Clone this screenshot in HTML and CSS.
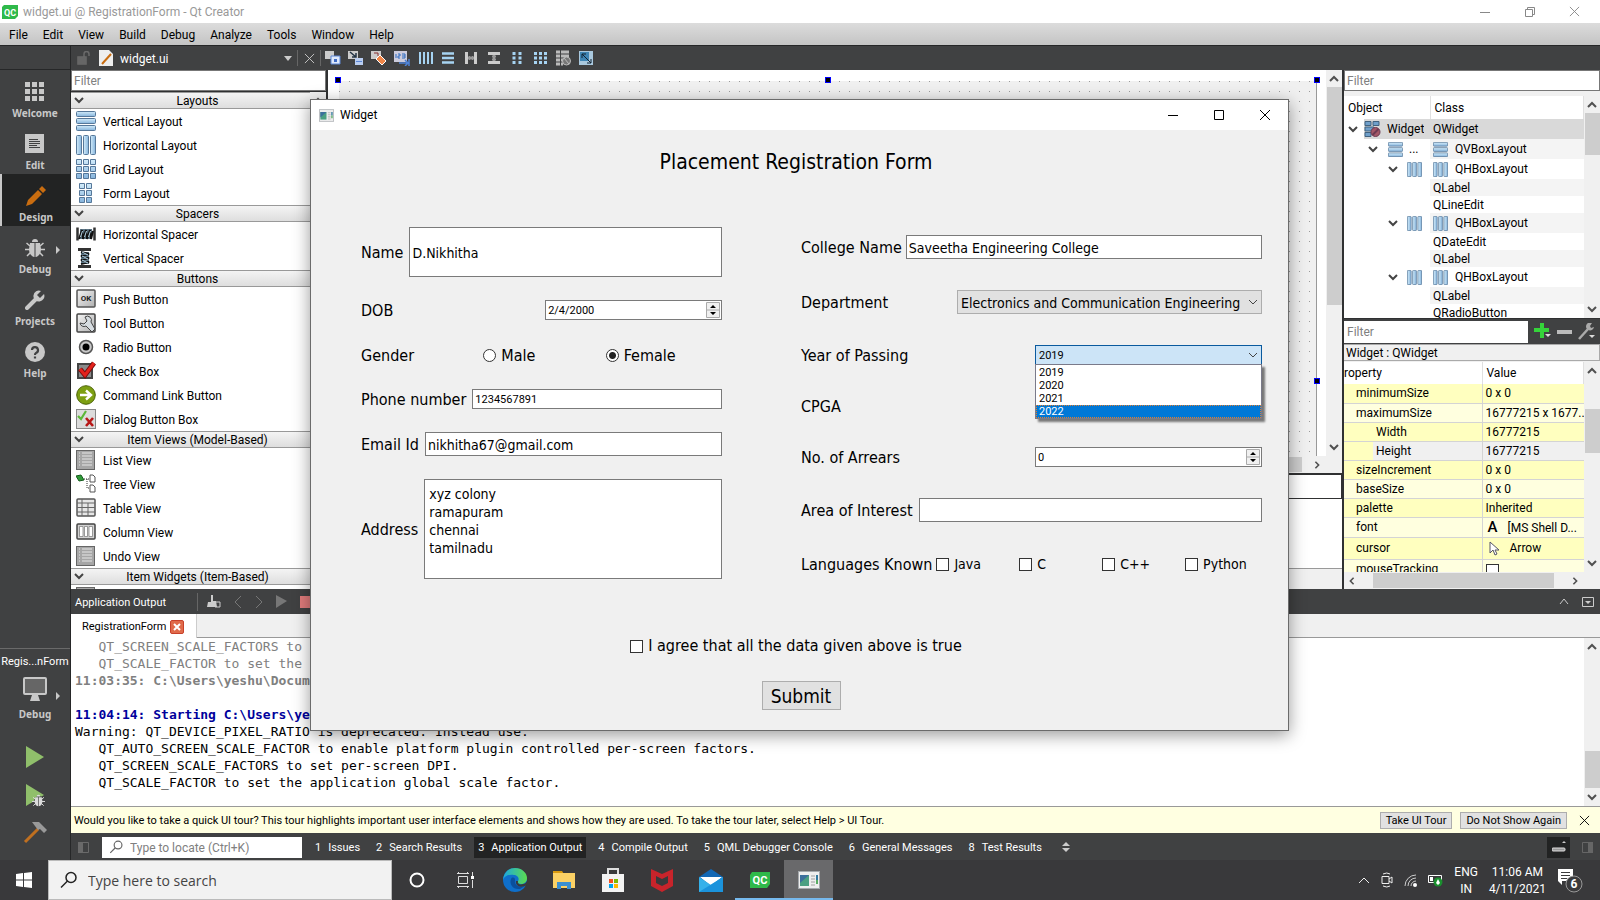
FILE: index.html
```html
<!DOCTYPE html>
<html lang="en">
<head>
<meta charset="utf-8">
<title>widget.ui @ RegistrationForm - Qt Creator</title>
<link rel="stylesheet" href="styles.css">
</head>
<body>
<svg class="defs" aria-hidden="true">
  <defs>
    <linearGradient id="blueV" x1="0" y1="0" x2="0" y2="1"><stop offset="0" stop-color="#d3ecfa"/><stop offset="1" stop-color="#86b4dc"/></linearGradient>
    <linearGradient id="blueH" x1="0" y1="0" x2="1" y2="0"><stop offset="0" stop-color="#d3ecfa"/><stop offset="1" stop-color="#86b4dc"/></linearGradient>
    <linearGradient id="greyV" x1="0" y1="0" x2="1" y2="1"><stop offset="0" stop-color="#f4f4f4"/><stop offset="1" stop-color="#b0b0b0"/></linearGradient>
    <linearGradient id="edge" x1="0" y1="0" x2="1" y2="0"><stop offset="0" stop-color="#1ca7e0"/><stop offset="1" stop-color="#5bdc4e"/></linearGradient>
  </defs>
  <symbol id="vlay" viewBox="0 0 20 20"><g fill="url(#blueV)" stroke="#56789a"><rect x=".5" y=".5" width="19" height="5" rx="1"/><rect x=".5" y="7.500" width="19" height="5" rx="1"/><rect x=".5" y="14.500" width="19" height="5" rx="1"/></g></symbol>
  <symbol id="hlay" viewBox="0 0 20 20"><g fill="url(#blueH)" stroke="#56789a"><rect x=".5" y=".5" width="5" height="19" rx="1"/><rect x="7.500" y=".5" width="5" height="19" rx="1"/><rect x="14.500" y=".5" width="5" height="19" rx="1"/></g></symbol>
  <symbol id="grid" viewBox="0 0 20 20"><g fill="url(#blueV)" stroke="#56789a"><path d="M.5 .5h5v5h-5zM7.500 .5h5v5h-5zM14.500 .5h5v5h-5zM.5 7.500h5v5h-5zM7.500 7.500h5v5h-5zM14.500 7.500h5v5h-5zM.5 14.500h5v5h-5zM7.500 14.500h5v5h-5zM14.500 14.500h5v5h-5z"/></g></symbol>
  <symbol id="formlay" viewBox="0 0 20 20"><g fill="url(#blueV)" stroke="#56789a"><path d="M3.500 .5h5v5h-5zM10.500 .5h5v5h-5zM3.500 7.500h5v5h-5zM10.500 7.500h5v5h-5zM3.500 14.500h5v5h-5zM10.500 14.500h5v5h-5z"/></g></symbol>
  <symbol id="hspace" viewBox="0 0 20 20"><path d="M4 5h12v10H4z" fill="#5d7686"/><path d="M1.500 3.500v13M18.500 3.500v13" stroke="#333" stroke-width="2.500"/><path d="M3 15l3-9 1 9 3-9 1 9 3-9 1 9 2-8" fill="none" stroke="#111" stroke-width="2"/><path d="M4.500 13l2-6M8.500 13l2-6M12.500 13l2-6" stroke="#b8d8ea"/></symbol>
  <symbol id="vspace" viewBox="0 0 20 20"><path d="M5 4h8v12H5z" fill="#5d7686"/><path d="M2 1.500h13M2 18.500h13" stroke="#333" stroke-width="3"/><path d="M5 4l8 2-8 2 8 2-8 2 8 2-8 2" fill="none" stroke="#111" stroke-width="2"/><path d="M6 4l6 3M6 8l6 3M6 12l6 3" stroke="#b8d8ea"/></symbol>
  <symbol id="tbtn" viewBox="0 0 20 20"><rect x="1" y="1" width="18" height="18" rx="1" fill="url(#greyV)" stroke="#444" stroke-width="1.500"/><path d="M9 4a4 4 0 0 1 6 5l4 7-3 3-6-6a4 4 0 0 1-6-3l4 1 3-3z" fill="#d6dce0" stroke="#444"/></symbol>
  <symbol id="rbtn" viewBox="0 0 20 20"><circle cx="10" cy="10" r="6.500" fill="#c8c8c8" stroke="#555" stroke-width="1.500"/><circle cx="10" cy="10" r="3.500"/></symbol>
  <symbol id="cbtn" viewBox="0 0 20 20"><rect x="2" y="3" width="14" height="14" fill="#8a8a8a" stroke="#444" stroke-width="2"/><path d="M4 8l5 6L18 2" fill="none" stroke="#7a0d0d" stroke-width="5"/><path d="M4 8l5 6L18 2" fill="none" stroke="#e3221c" stroke-width="3"/></symbol>
  <symbol id="clbtn" viewBox="0 0 20 20"><circle cx="10" cy="10" r="9.300" fill="#7d9f12" stroke="#4d6408"/><path d="M4 10h10M10 5.500l5 4.500-5 4.500" fill="none" stroke="#fff" stroke-width="2.400"/></symbol>
  <symbol id="dbtn" viewBox="0 0 20 20"><rect x=".5" y=".5" width="19" height="19" fill="#dcdcdc" stroke="#888"/><path d="M2 7l3 3 5-8" fill="none" stroke="#5cb838" stroke-width="2.200"/><path d="M10 9l7 8M17 9l-7 8" stroke="#b81818" stroke-width="2.600"/></symbol>
  <symbol id="lview" viewBox="0 0 20 20"><rect x=".5" y=".5" width="18" height="19" fill="#a6a6a6" stroke="#666"/><path d="M3 3h1M3 6h1M3 9h1M3 12h1M3 15h1M6 3h10M6 6h10M6 9h10M6 12h10M6 15h10" stroke="#e6e6e6"/></symbol>
  <symbol id="tview" viewBox="0 0 20 20"><path d="M0 2l5-1 3 5-5 1z" fill="#2f9b38" stroke="#145a1c"/><path d="M8 5h6M11 5v9h3" stroke="#333" stroke-dasharray="1 1" fill="none"/><path d="M14 1h3l2 2v5h-5zM14 11h3l2 2v5h-5z" fill="#fff" stroke="#555"/></symbol>
  <symbol id="taview" viewBox="0 0 20 20"><rect x="1" y="1" width="18" height="17" rx="1" fill="#e6e6e6" stroke="#555" stroke-width="1.500"/><path d="M1 5h18M1 9.500h18M1 14h18M6 1v17M12 5v13" stroke="#666"/></symbol>
  <symbol id="coview" viewBox="0 0 20 20"><rect x="1" y="2" width="18" height="15" rx="1" fill="#d2d2d2" stroke="#444" stroke-width="1.500"/><path d="M3.500 4.500h3.500v10h-3.500zM8.500 4.500h3v10h-3zM13 4.500h3.500v10h-3.500z" fill="#fff" stroke="#777" stroke-width=".7"/></symbol>
  <symbol id="dn" viewBox="0 0 10 8"><path d="M1 2l4 4 4-4" fill="none" stroke="currentColor" stroke-width="2"/></symbol>
  <symbol id="up" viewBox="0 0 10 8"><path d="M1 6l4-4 4 4" fill="none" stroke="currentColor" stroke-width="2"/></symbol>
  <symbol id="lt" viewBox="0 0 8 10"><path d="M6 1l-4 4 4 4" fill="none" stroke="currentColor" stroke-width="2"/></symbol>
  <symbol id="rt" viewBox="0 0 8 10"><path d="M2 1l4 4-4 4" fill="none" stroke="currentColor" stroke-width="2"/></symbol>
  <symbol id="x" viewBox="0 0 12 12"><path d="M1 1l10 10M11 1L1 11" fill="none" stroke="currentColor"/></symbol>
  <symbol id="mag" viewBox="0 0 18 18"><circle cx="11" cy="6.500" r="5" fill="none" stroke="currentColor" stroke-width="1.500"/><path d="M7.500 10L1 16.500" stroke="currentColor" stroke-width="1.500"/></symbol>
  <symbol id="bug" viewBox="0 0 20 20"><path d="M7 4a3 3 0 0 1 6 0zM5 5h4.500v14C6 18.500 4 15 4 11zM10.500 5H15l1 6c0 4-2 7.500-5.500 8z" fill="currentColor"/><path d="M5 8L1.500 5M15 8l3.500-3M5 11.500H0M15 11.500h5M5.500 14.500L2 18M14.500 14.500L18 18" stroke="currentColor" stroke-width="1.500"/></symbol>
  <symbol id="win" viewBox="0 0 22 18"><rect x=".5" y=".5" width="21" height="17" fill="#eee" stroke="#a5a9ad"/><rect x="2" y="4" width="9" height="11" fill="#4b9f82"/><path d="M2 4h9L2 12z" fill="#3c6f9c"/><path d="M13 5h4M13 8h4M13 11h4M13 14h4" stroke="#bbb" stroke-width="1.500"/><path d="M19 4v5" stroke="#337a9f" stroke-width="2"/><path d="M19 9v4" stroke="#58ac62" stroke-width="2"/></symbol>
</svg>

<header class="titlebar">
  <svg width="16" height="16" viewBox="0 0 16 16"><path d="M2 1h14v11l-3 3H0V3z" fill="#2fb94a"/><text x="8" y="12" class="qc-s">QC</text></svg>
  <span class="tb-title">widget.ui @ RegistrationForm - Qt Creator</span>
  <button class="wbtn" aria-label="Minimize"><svg width="10" height="10"><path d="M0 5.500h10" stroke="#888"/></svg></button>
  <button class="wbtn" aria-label="Restore"><svg width="10" height="10" viewBox="0 0 10 10"><path d="M.5 2.500h7v7h-7zM2.500 2.500v-2h7v7h-2" fill="none" stroke="#888"/></svg></button>
  <button class="wbtn" aria-label="Close"><svg width="11" height="11"><use href="#x"/></svg></button>
</header>
<nav class="menubar">
  <a href="#file">File</a><a href="#edit">Edit</a><a href="#view">View</a><a href="#build">Build</a><a href="#debug">Debug</a><a href="#analyze">Analyze</a><a href="#tools">Tools</a><a href="#window">Window</a><a href="#help">Help</a>
</nav>

<div class="ide">
  <aside class="modes">
    <div class="modes-cap"></div>
    <button class="mode"><svg width="20" height="20"><path fill="#c8c8c8" d="M0 0h5v5H0zM7 0h5v5H7zM14 0h5v5h-5zM0 7h5v5H0zM7 7h5v5H7zM14 7h5v5h-5zM0 14h5v5H0zM7 14h5v5H7zM14 14h5v5h-5z"/></svg>Welcome</button>
    <button class="mode"><svg width="20" height="20"><path fill="#c8c8c8" d="M0 0h19v19H0z"/><path d="M4 5.500h9M4 7.500h11M4 9.500h11M4 11.500h8M4 13.500h11" stroke="#404142"/></svg>Edit</button>
    <button class="mode on"><svg width="20" height="20"><path fill="#c96d10" d="M0 20l2-6L12 4l4 4L6 18zM13 3l3-3 4 4-3 3z"/></svg>Design</button>
    <button class="mode"><svg width="20" height="20"><use href="#bug"/></svg>Debug<svg class="mode-arr" width="4" height="8"><path d="M0 0l4 4-4 4z" fill="#c8c8c8"/></svg></button>
    <button class="mode"><svg width="20" height="20"><path d="M2 18l9-9" stroke="#c8c8c8" stroke-width="4" stroke-linecap="round"/><path d="M16 1a5.500 5.500 0 1 0 3 3l-4 4-3-3z" fill="#c8c8c8"/></svg>Projects</button>
    <button class="mode"><svg width="20" height="20"><circle cx="10" cy="10" r="10" fill="#c8c8c8"/><path d="M7 8a3 3 0 1 1 4 3q-1 .5-1 2M10 14.500v2" fill="none" stroke="#404142" stroke-width="2.200"/></svg>Help</button>
    <div class="kit">
      <span class="kit-name">Regis...nForm</span>
      <button class="mode"><svg width="24" height="24"><rect x="1" y="1" width="22" height="16" rx="1" fill="#666" stroke="#c8c8c8" stroke-width="2"/><path d="M9 18h6l2 6H7z" fill="#c8c8c8"/></svg>Debug<svg class="mode-arr" width="4" height="8"><path d="M0 0l4 4-4 4z" fill="#c8c8c8"/></svg></button>
      <button class="run" aria-label="Run"><svg width="20" height="22"><path d="M1 0l18 11L1 22z" fill="#90bf6b"/></svg></button>
      <button class="run" aria-label="Debug run"><svg width="20" height="23" viewBox="0 0 20 23"><path d="M1 0l18 11L1 22z" fill="#90bf6b"/><circle cx="14" cy="17" r="5" fill="#404142"/><g color="#dcdcdc"><use href="#bug" x="7" y="10" width="13" height="13"/></g></svg></button>
      <button class="run" aria-label="Build"><svg width="24" height="22"><path d="M2 20L15 7" stroke="#c07020" stroke-width="3"/><path d="M9 0h7l8 8-3 3-4-4-2 1-3-4z" fill="#999"/></svg></button>
    </div>
  </aside>

  <div class="work">
    <div class="toolbar">
      <div class="tb-doc">
        <svg width="14" height="14"><path d="M1 6h8v7H1zM7 6V3a2 2 0 0 1 5 0v2" fill="none" stroke="#6a6a6a" stroke-width="1.500"/><path d="M1 6h8v7H1z" fill="#666"/></svg>
        <svg width="14" height="16"><path d="M0 0h10l4 4v12H0z" fill="#eee"/><path d="M3 14L12 4" stroke="#c96d10" stroke-width="2"/></svg>
        <span>widget.ui</span>
        <svg class="push" width="8" height="5"><path d="M0 0h8L4 5z" fill="#ccc"/></svg>
      </div>
      <button class="tool close" aria-label="Close document"><svg width="11" height="11"><use href="#x"/></svg></button>
      <button class="tool" aria-label="Edit widgets"><svg width="16" height="16"><path d="M0 1h9v8H0z" fill="#ccc"/><path d="M6 6h9v8H6z" fill="#dfe9fb" stroke="#5c87d6"/><path d="M9 9h3v3H9z" fill="#3f6bc4"/></svg></button>
      <button class="tool" aria-label="Edit signals"><svg width="16" height="16"><path d="M0 1h10v8H0z" fill="#ccc"/><path d="M2 2l6 5M8 3v4H4" stroke="#234" stroke-width="1.500" fill="none"/><path d="M7 8h8v7H7z" fill="#b9cdf0"/><path d="M8 11.500h6" stroke="#5c87d6"/></svg></button>
      <button class="tool" aria-label="Edit buddies"><svg width="16" height="16"><path d="M0 1h10v8H0z" fill="#ccc"/><path d="M3 3h4v3" stroke="#833" fill="none"/><path d="M9 5l6 6-4 4-6-6z" fill="#f08648" stroke="#fff"/></svg></button>
      <button class="tool" aria-label="Edit tab order"><svg width="16" height="16"><path d="M0 1h13v11H0z" fill="#ccd"/><path d="M2 4v4M4 4h2v2H4v2h2M8 4h3v4H8M8 6h3" stroke="#2d6ac0" fill="none"/><path d="M5 13h8M11 10l3 3-3 3M15 9v7" stroke="#4d83d9" stroke-width="1.500" fill="none"/></svg></button>
      <button class="tool" aria-label="Lay out horizontally"><svg width="16" height="16"><path d="M3 2v12M7 2v12M11 2v12M15 2v12" stroke="#a6d3f2" stroke-width="2"/></svg></button>
      <button class="tool" aria-label="Lay out vertically"><svg width="16" height="16"><path d="M2 3.500h12M2 8h12M2 12.500h12" stroke="#a6d3f2" stroke-width="2.500"/></svg></button>
      <button class="tool" aria-label="Horizontal splitter"><svg width="16" height="16"><path d="M3.500 2v12M12.500 2v12" stroke="#ccc" stroke-width="3"/><path d="M5 8h6M6.500 6v4M9.500 6v4" stroke="#999" stroke-width="2"/></svg></button>
      <button class="tool" aria-label="Vertical splitter"><svg width="16" height="16"><path d="M2 3.500h12M2 12.500h12" stroke="#ccc" stroke-width="3"/><path d="M8 5v6M6 6.500h4M6 9.500h4" stroke="#999" stroke-width="2"/></svg></button>
      <button class="tool" aria-label="Form layout"><svg width="16" height="16"><path d="M5 2v12M11 2v12" stroke="#a6d3f2" stroke-width="3" stroke-dasharray="3 1.500"/></svg></button>
      <button class="tool" aria-label="Grid layout"><svg width="16" height="16"><path d="M3.500 2v12M8.500 2v12M13.500 2v12" stroke="#a6d3f2" stroke-width="3" stroke-dasharray="3 1.500"/></svg></button>
      <button class="tool" aria-label="Break layout"><svg width="16" height="16"><path d="M1 2h13M1 6h13M1 10h7M1 14h7" stroke="#bbb" stroke-width="3"/><path d="M5.500 0v16" stroke="#404142"/><circle cx="11.500" cy="11" r="4" fill="#777" stroke="#bbb"/><path d="M9 8l5 6" stroke="#bbb"/></svg></button>
      <button class="tool" aria-label="Adjust size"><svg width="16" height="16"><path d="M1 1h14v14H1z" fill="#a9c8de"/><path d="M2 2h9v9H2z" fill="#3f85b4"/><path d="M4 4l9 9M13 9v4H9M4 8V4h4" stroke="#123" fill="none"/></svg></button>
    </div>

    <div class="panes">
      <section class="wbox">
        <input class="filter" type="text" placeholder="Filter" aria-label="Filter widgets">
        <div class="wlist">
          <div class="wscroll">
            <h2 class="whead"><svg width="10" height="8"><use href="#dn"/></svg>Layouts</h2>
            <ul><li><svg><use href="#vlay"/></svg><span>Vertical Layout</span></li><li><svg><use href="#hlay"/></svg><span>Horizontal Layout</span></li><li><svg><use href="#grid"/></svg><span>Grid Layout</span></li><li><svg><use href="#formlay"/></svg><span>Form Layout</span></li></ul>
            <h2 class="whead"><svg width="10" height="8"><use href="#dn"/></svg>Spacers</h2>
            <ul><li><svg><use href="#hspace"/></svg><span>Horizontal Spacer</span></li><li><svg><use href="#vspace"/></svg><span>Vertical Spacer</span></li></ul>
            <h2 class="whead"><svg width="10" height="8"><use href="#dn"/></svg>Buttons</h2>
            <ul><li><svg viewBox="0 0 20 20"><rect x="1" y="1" width="18" height="17" rx="1" fill="url(#greyV)" stroke="#555" stroke-width="1.500"/><text x="10" y="12" class="ok">OK</text></svg><span>Push Button</span></li><li><svg><use href="#tbtn"/></svg><span>Tool Button</span></li><li><svg><use href="#rbtn"/></svg><span>Radio Button</span></li><li><svg><use href="#cbtn"/></svg><span>Check Box</span></li><li><svg><use href="#clbtn"/></svg><span>Command Link Button</span></li><li><svg><use href="#dbtn"/></svg><span>Dialog Button Box</span></li></ul>
            <h2 class="whead"><svg width="10" height="8"><use href="#dn"/></svg>Item Views (Model-Based)</h2>
            <ul><li><svg><use href="#lview"/></svg><span>List View</span></li><li><svg><use href="#tview"/></svg><span>Tree View</span></li><li><svg><use href="#taview"/></svg><span>Table View</span></li><li><svg><use href="#coview"/></svg><span>Column View</span></li><li><svg><use href="#lview"/></svg><span>Undo View</span></li></ul>
            <h2 class="whead"><svg width="10" height="8"><use href="#dn"/></svg>Item Widgets (Item-Based)</h2>
            <ul><li><svg><use href="#lview"/></svg></li></ul>
          </div>
          <div class="sb"><svg class="ar"><use href="#up"/></svg></div>
        </div>
      </section>

      <section class="canvas">
        <div class="canvas-view">
          <div class="sheet">
            <i class="handle h-tl"></i><i class="handle h-tc"></i><i class="handle h-tr"></i><i class="handle h-mr"></i>
            <div class="layout-line"></div>
          </div>
          <div class="sb"><svg class="ar"><use href="#up"/></svg><b class="thumb t-canvas"></b><svg class="ar end"><use href="#dn"/></svg></div>
        </div>
        <div class="hsb"><b class="hthumb"></b><svg class="ar"><use href="#rt"/></svg></div>
        <div class="act-filter"></div>
        <div class="act-list"></div>
        <div class="act-tabs"></div>
      </section>

      <section class="inspect">
        <div class="objects">
          <input class="filter" type="text" placeholder="Filter" aria-label="Filter objects">
          <div class="objs">
            <table class="tree">
              <thead><tr><th>Object</th><th>Class</th></tr></thead>
              <tbody>
                <tr class="sel tall"><td><div class="c l0"><svg class="ex"><use href="#dn"/></svg><span class="nm"><svg class="ic" viewBox="0 0 16 16"><path d="M.5 .5h6v4h-6zM8.500 .5h6v4h-6zM.5 6h9v4h-9zM.5 11.500h6v4h-6z" fill="#6f9fca" stroke="#41627f"/><circle cx="11" cy="11" r="4.500" fill="#a35767" stroke="#6d3a52"/><path d="M8 14l6-6" stroke="#6d3a52" stroke-width="2"/></svg>Widget</span></div></td><td>QWidget</td></tr>
                <tr class="alt tall"><td><div class="c l1"><svg class="ex"><use href="#dn"/></svg><span class="nm"><svg class="ic"><use href="#vlay"/></svg>...</span></div></td><td><svg class="ic"><use href="#vlay"/></svg>QVBoxLayout</td></tr>
                <tr class="tall"><td><div class="c l2"><svg class="ex"><use href="#dn"/></svg><span class="nm"><svg class="ic"><use href="#hlay"/></svg></span></div></td><td><svg class="ic"><use href="#hlay"/></svg>QHBoxLayout</td></tr>
                <tr class="alt"><td></td><td>QLabel</td></tr>
                <tr><td></td><td>QLineEdit</td></tr>
                <tr class="alt tall"><td><div class="c l2"><svg class="ex"><use href="#dn"/></svg><span class="nm"><svg class="ic"><use href="#hlay"/></svg></span></div></td><td><svg class="ic"><use href="#hlay"/></svg>QHBoxLayout</td></tr>
                <tr><td></td><td>QDateEdit</td></tr>
                <tr class="alt"><td></td><td>QLabel</td></tr>
                <tr class="tall"><td><div class="c l2"><svg class="ex"><use href="#dn"/></svg><span class="nm"><svg class="ic"><use href="#hlay"/></svg></span></div></td><td><svg class="ic"><use href="#hlay"/></svg>QHBoxLayout</td></tr>
                <tr class="alt"><td></td><td>QLabel</td></tr>
                <tr><td></td><td>QRadioButton</td></tr>
              </tbody>
            </table>
            <div class="sb"><svg class="ar"><use href="#up"/></svg><b class="thumb t-obj"></b><svg class="ar end"><use href="#dn"/></svg></div>
          </div>
        </div>
        <div class="prop-bar">
          <input class="filter" type="text" placeholder="Filter" aria-label="Filter properties">
          <button aria-label="Add property"><svg width="17" height="17"><path d="M6 0h4v5h5v4h-5v6H6V9H0V5h6z" fill="#35d43a"/><path d="M11 11h6l-3 3z" fill="#ddd"/></svg></button>
          <button aria-label="Remove property"><svg width="15" height="4"><path d="M0 0h15v4H0z" fill="#bbb"/></svg></button>
          <button aria-label="Configure"><svg width="17" height="17"><path d="M1 16l9-10" stroke="#aaa" stroke-width="2.500"/><path d="M14 0a4 4 0 1 0 2 4l-3 1-1-2z" fill="#aaa"/><path d="M11 12h6l-3 3z" fill="#ddd"/></svg></button>
        </div>
        <div class="prop-name">Widget : QWidget</div>
        <div class="objs props-wrap">
          <table class="props">
            <thead><tr><th>roperty</th><th>Value</th></tr></thead>
            <tbody>
              <tr class="d"><td>minimumSize</td><td>0 x 0</td></tr>
              <tr class="p"><td>maximumSize</td><td>16777215 x 1677...</td></tr>
              <tr class="d"><td class="in">Width</td><td>16777215</td></tr>
              <tr class="g"><td class="in"><span>Height</span></td><td>16777215</td></tr>
              <tr class="d"><td>sizeIncrement</td><td>0 x 0</td></tr>
              <tr class="p"><td>baseSize</td><td>0 x 0</td></tr>
              <tr class="d"><td>palette</td><td>Inherited</td></tr>
              <tr class="p mid"><td>font</td><td><b class="fa">A</b>[MS Shell D...</td></tr>
              <tr class="d big"><td>cursor</td><td><svg class="cur" width="10" height="15"><path d="M1 1v11l3-3 2 5 2-1-2-4h4z" fill="#fff" stroke="#556"/></svg>Arrow</td></tr>
              <tr class="p"><td>mouseTracking</td><td><input type="checkbox" class="tick" aria-label="mouseTracking"></td></tr>
            </tbody>
          </table>
          <div class="sb"><svg class="ar"><use href="#up"/></svg><b class="thumb t-prop"></b><svg class="ar end"><use href="#dn"/></svg></div>
        </div>
        <div class="hsb phsb"><svg class="ar"><use href="#lt"/></svg><b class="hthumb"></b><svg class="ar"><use href="#rt"/></svg></div>
      </section>
    </div>

    <section class="output">
      <div class="out-head">
        <span class="out-title">Application Output</span>
        <button aria-label="Clear"><svg width="15" height="14"><path d="M5 0h2v6h3l1 6H1l1-5h3z" fill="#ccc"/><path d="M9 7h5v5H9" fill="none" stroke="#ccc"/></svg></button>
        <button aria-label="Previous"><svg width="8" height="12"><path d="M7 0L1 6l6 6" stroke="#777" fill="none"/></svg></button>
        <button aria-label="Next"><svg width="8" height="12"><path d="M1 0l6 6-6 6" stroke="#777" fill="none"/></svg></button>
        <button aria-label="Rerun"><svg width="11" height="13"><path d="M0 0l11 6-11 7z" fill="#777"/></svg></button>
        <button aria-label="Stop"><svg width="12" height="12"><path d="M0 0h12v12H0z" fill="#e07b7b"/></svg></button>
        <button class="push" aria-label="Maximize"><svg width="10" height="7"><path d="M1 6l4-5 4 5" stroke="#ccc" fill="none"/></svg></button>
        <button aria-label="Close pane"><svg width="12" height="10"><path d="M.5 .5h11v9H.5z" stroke="#ccc" fill="none"/><path d="M3 4h6L6 7z" fill="#ccc"/></svg></button>
      </div>
      <div class="out-tabs"><div class="out-tab">RegistrationForm<button class="tabx" aria-label="Close tab"><svg width="8" height="8" viewBox="0 0 8 8"><path d="M1 1l6 6M7 1L1 7" stroke="#fff" stroke-width="2"/></svg></button></div></div>
      <div class="out-body">
<pre class="log"><span class="old">   QT_SCREEN_SCALE_FACTORS to set per-screen DPI.
   QT_SCALE_FACTOR to set the application global scale factor.
<b>11:03:35: C:\Users\yeshu\Documents\RegistrationForm.exe exited with code 0</b></span>

<b class="start">11:04:14: Starting C:\Users\yeshu\Documents\RegistrationForm.exe ...</b>
Warning: QT_DEVICE_PIXEL_RATIO is deprecated. Instead use:
   QT_AUTO_SCREEN_SCALE_FACTOR to enable platform plugin controlled per-screen factors.
   QT_SCREEN_SCALE_FACTORS to set per-screen DPI.
   QT_SCALE_FACTOR to set the application global scale factor.</pre>
        <div class="sb"><svg class="ar"><use href="#up"/></svg><b class="thumb t-out"></b><svg class="ar"><use href="#dn"/></svg></div>
      </div>
    </section>
    <div class="tour">
      <span>Would you like to take a quick UI tour? This tour highlights important user interface elements and shows how they are used. To take the tour later, select Help &gt; UI Tour.</span>
      <button class="tbtn push">Take UI Tour</button><button class="tbtn">Do Not Show Again</button>
      <button class="plain" aria-label="Dismiss"><svg width="11" height="11"><use href="#x"/></svg></button>
    </div>
    <div class="status">
      <svg class="side" width="11" height="11"><path d="M.5 .5h10v10H.5z" fill="none" stroke="#6a6a6a"/><path d="M0 0h5v11H0z" fill="#6a6a6a"/></svg>
      <label class="locate"><svg width="15" height="14" viewBox="0 0 18 18"><use href="#mag"/></svg><input type="text" placeholder="Type to locate (Ctrl+K)" aria-label="Type to locate"></label>
      <button class="pane"><i>1</i>Issues</button><button class="pane"><i>2</i>Search Results</button><button class="pane on"><i>3</i>Application Output</button><button class="pane"><i>4</i>Compile Output</button><button class="pane"><i>5</i>QML Debugger Console</button><button class="pane"><i>6</i>General Messages</button><button class="pane"><i>8</i>Test Results</button>
      <svg class="updn" width="8" height="10"><path d="M0 4l4-4 4 4zM0 6h8l-4 4z" fill="#ccc"/></svg>
      <span class="prog push"><svg width="14" height="12"><path d="M10 2l2-2 2 2z" fill="#ccc"/><rect x="0" y="7" width="13" height="3" rx="1" fill="#999" stroke="#ddd"/></svg></span>
      <svg class="side2" width="11" height="11"><path d="M.5 .5h10v10H.5z" fill="none" stroke="#666"/><path d="M6 0h5v11H6z" fill="#666"/></svg>
    </div>
  </div>
</div>

<footer class="taskbar">
  <button class="start-btn" aria-label="Start"><svg width="16" height="16"><path d="M0 2l7-1v6.500H0zM8 1l8-1v7.500H8zM0 8.500h7V15l-7-1zM8 8.500h8V16l-8-1z" fill="#fff"/></svg></button>
  <label class="search"><svg width="18" height="18"><use href="#mag"/></svg><input type="text" placeholder="Type here to search" aria-label="Type here to search"></label>
  <button class="app" aria-label="Cortana"><svg width="16" height="16"><circle cx="8" cy="8" r="6.500" fill="none" stroke="#fff" stroke-width="2"/></svg></button>
  <button class="app" aria-label="Task view"><svg width="17" height="16"><path d="M1.500 4.500h9v7h-9zM0 1.500h12M0 14.500h12M1.500 0v2M10.500 0v2M1.500 14v2M10.500 14v2M15.500 0v4M15.500 8v8" fill="none" stroke="#ddd"/><path d="M14 4h3v3h-3z" fill="#fff"/></svg></button>
  <button class="app" aria-label="Edge"><svg width="24" height="24" viewBox="0 0 24 24"><circle cx="12" cy="12" r="12" fill="#0f6fca"/><path d="M0 12C1 4 6 0 12 0c7 0 12 5 12 10 0 4-3 6-6 6-2 0-4-1-3-3 2-3-1-6-4-6C6 6 1 8 0 12z" fill="url(#edge)"/><path d="M8 11c-2 5 2 11 9 10l5-3c-5 2-11 0-10-6 0-3-3-3-4-1z" fill="#0b4f9c"/><path d="M15 13c-1 3 2 4 5 3 2 0 3-1 4-3l0 4-2 1c-4 2-10 0-9-5z" fill="#39393b"/></svg></button>
  <button class="app" aria-label="File Explorer"><svg width="22" height="18"><path d="M0 0h9l2 3H0z" fill="#d99a10"/><path d="M0 2h22v15H0z" fill="#fbd165"/><path d="M4 18v-7h14v7h-4v-3H8v3z" fill="#3b8fd0"/></svg></button>
  <button class="app" aria-label="Store"><svg width="24" height="24"><path d="M7 7V1h10v6" fill="none" stroke="#ddd" stroke-width="2"/><path d="M1 6h22v18H1z" fill="#f3f3f3"/><path d="M8 11h4v4H8z" fill="#f25022"/><path d="M13 11h4v4h-4z" fill="#7fba00"/><path d="M8 16h4v4H8z" fill="#00a4ef"/><path d="M13 16h4v4h-4z" fill="#ffb900"/></svg></button>
  <button class="app" aria-label="McAfee"><svg width="22" height="24"><path d="M0 1l11 5L22 1v17l-11 6-11-6z" fill="#c8242b"/><path d="M5 8l6 3 6-3v7l-6 3-6-3z" fill="#39393b"/></svg></button>
  <button class="app" aria-label="Mail"><svg width="24" height="23"><path d="M0 8l12-8 12 8v4H0z" fill="#1267b4"/><path d="M1 8h22L12 17z" fill="#fff"/><path d="M0 8l12 8 12-8v15H0z" fill="#35b1ea"/><path d="M2 8h20L12 15z" fill="#fff"/><path d="M0 23l24-15v15z" fill="#1b93dc"/></svg></button>
  <button class="app run-app" aria-label="Qt Creator"><svg width="20" height="16" viewBox="0 0 20 16"><path d="M2 0h18v12l-3 4H0V3z" fill="#2fb94a"/><text x="10" y="12" class="qc-m">QC</text></svg></button>
  <button class="app act-app" aria-label="Widget"><svg width="22" height="18"><use href="#win"/></svg></button>
  <div class="tray">
    <svg width="12" height="8"><path d="M1 7l5-5 5 5" fill="none" stroke="#eee"/></svg>
    <svg width="12" height="16"><path d="M1 4.500h7v7H1zM8 7l3-2v6L8 9M2 2q4-2 7 0M2 14q4 2 7 0" fill="none" stroke="#eee"/></svg>
    <svg width="13" height="13"><path d="M1 12A11 11 0 0 1 12 1M4 12a8 8 0 0 1 8-8M7 12a5 5 0 0 1 5-5" fill="none" stroke="#ccc"/><circle cx="11" cy="11" r="2" fill="#fff"/></svg>
    <svg width="15" height="13"><path d="M.5 1.500h13v7H.5z" fill="none" stroke="#fff"/><path d="M2 3h3v4H2z" fill="#fff"/><circle cx="10" cy="8" r="4.500" fill="#1a8f2e"/><path d="M8 9l2-4 2 4-2 2z" fill="#fff"/></svg>
    <div class="two">ENG<br>IN</div>
    <div class="two clock">11:06 AM<br>4/11/2021</div>
    <svg width="26" height="26"><path d="M1 2h15v12H5v4l-4-4z" fill="#fff"/><path d="M4 5.500h9M4 8.500h9M4 11.500h6" stroke="#3a3a3c"/><circle cx="17" cy="17" r="8" fill="#3a3a3c" stroke="#999"/><text x="17" y="21" class="badge">6</text></svg>
  </div>
</footer>

<main class="dialog">
  <div class="dlg-bar">
    <svg width="15" height="13"><use href="#win"/></svg><span>Widget</span>
    <button class="wbtn dk push" aria-label="Minimize"><svg width="10" height="10"><path d="M0 5.500h10" stroke="#000"/></svg></button>
    <button class="wbtn dk" aria-label="Maximize"><svg width="10" height="10"><path d="M.5 .5h9v9h-9z" fill="none" stroke="#000"/></svg></button>
    <button class="wbtn dk" aria-label="Close"><svg width="12" height="12"><use href="#x"/></svg></button>
  </div>
  <form class="reg">
    <h1>Placement Registration Form</h1>
    <div class="cols">
      <div class="col">
        <div class="row"><label for="name">Name</label><input id="name" class="f big-in" type="text" value="D.Nikhitha"></div>
        <div class="row"><label for="dob">DOB</label><span class="spin half push"><input id="dob" type="text" value="2/4/2000"><svg width="14" height="16"><path d="M.5 .5h13v15H.5zM0 8h14" fill="#f0f0f0" stroke="#aaa"/><path d="M4 6h6L7 3zM4 10h6l-3 3z"/></svg></span></div>
        <div class="row gender"><span>Gender</span><label><input type="radio" name="g">Male</label><label><input type="radio" name="g" checked>Female</label></div>
        <div class="row"><label for="phone">Phone number</label><input id="phone" class="f small-in" type="text" value="1234567891"></div>
        <div class="row"><label for="email">Email Id</label><input id="email" class="f" type="text" value="nikhitha67@gmail.com"></div>
        <div class="row"><label for="addr">Address</label><textarea id="addr" class="f">xyz colony
ramapuram
chennai
tamilnadu</textarea></div>
      </div>
      <div class="col right">
        <div class="row tight"><label for="college">College Name</label><input id="college" class="f" type="text" value="Saveetha Engineering College"></div>
        <div class="row"><label for="dept">Department</label><span class="sel-wrap dept push"><select id="dept"><option>Electronics and Communication Engineering</option></select><svg width="10" height="8"><path d="M1 2l4 4 4-4" fill="none" stroke="#444"/></svg></span></div>
        <div class="row"><label for="year">Year of Passing</label><span class="sel-wrap year half2 push"><select id="year"><option>2019</option><option>2020</option><option>2021</option><option>2022</option></select><svg width="10" height="8"><path d="M1 2l4 4 4-4" fill="none" stroke="#444"/></svg>
          <ul class="popup" role="listbox" aria-label="Year options"><li role="option">2019</li><li role="option">2020</li><li role="option">2021</li><li role="option" aria-selected="true" class="hot">2022</li></ul></span></div>
        <div class="row"><label for="cpga">CPGA</label><input id="cpga" class="f small-in half2 push" type="text"></div>
        <div class="row"><label for="arr">No. of Arrears</label><span class="spin half2 push"><input id="arr" type="text" value="0"><svg width="14" height="16"><path d="M.5 .5h13v15H.5zM0 8h14" fill="#f0f0f0" stroke="#aaa"/><path d="M4 6h6L7 3zM4 10h6l-3 3z"/></svg></span></div>
        <div class="row"><label for="area">Area of Interest</label><input id="area" class="f" type="text"></div>
        <div class="row tight"><span>Languages Known</span><div class="langs"><label><input type="checkbox" class="tick">Java</label><label><input type="checkbox" class="tick">C</label><label><input type="checkbox" class="tick">C++</label><label><input type="checkbox" class="tick">Python</label></div></div>
      </div>
    </div>
    <label class="agree"><input type="checkbox" class="tick">I agree that all the data given above is true</label>
    <button type="button" class="submit">Submit</button>
  </form>
</main>
</body>
</html>
```
FILE: styles.css
```css
* { box-sizing: border-box; }
body {
  margin: 0; height: 100vh; display: flex; flex-direction: column; overflow: hidden; position: relative;
  font: 12px/16px Roboto, "Liberation Sans", sans-serif; color: #000; background: #404142;
}
button { font: inherit; color: inherit; background: none; border: 0; padding: 0; margin: 0; }
input, select, textarea { font: inherit; color: inherit; margin: 0; border-radius: 0; outline: 0; }
ul { list-style: none; margin: 0; padding: 0; }
h1, h2 { margin: 0; font-weight: 400; }
a { color: inherit; text-decoration: none; }
svg { display: block; flex: none; }
table { border-collapse: collapse; }
.defs { position: absolute; width: 0; height: 0; }
.push { margin-left: auto; }
::placeholder { color: #808080; opacity: 1; }
.qc-s, .qc-m, .badge, .ok { font-family: Roboto, sans-serif; font-weight: 700; text-anchor: middle; fill: #fff; }
.qc-s { font-size: 9px; }
.qc-m { font-size: 11px; }
.badge { font-size: 12px; }
.ok { font-size: 8px; fill: #222; }

/* main window frame */
.titlebar { height: 23px; flex: none; background: #fff; display: flex; align-items: center; padding-left: 2px; color: #999; }
.tb-title { margin-left: 5px; flex: 1; }
.wbtn { width: 46px; height: 21px; display: grid; place-items: center; color: #888; }
.titlebar .wbtn { width: 45px; }
.titlebar { padding-right: 3px; }
.wbtn.dk { height: 29px; color: #000; }
.menubar { height: 23px; flex: none; display: flex; align-items: center; gap: 15px; padding: 2px 0 0 9px; background: linear-gradient(#dcdcdc, #c4c4c4); border-bottom: 1px solid #262728; }
.ide { flex: 1; min-height: 0; display: flex; }

/* mode selector */
.modes { width: 71px; flex: none; display: flex; flex-direction: column; color: #c8c8c8; border-right: 1px solid #262728; background: #404142; }
.modes-cap { height: 24px; flex: none; border-bottom: 1px solid #262728; }
.mode { position: relative; height: 52px; flex: none; display: flex; flex-direction: column; align-items: center; justify-content: flex-end; gap: 3px; padding-bottom: 1px; font: 700 10px/16px "Noto Sans", sans-serif; }
.mode.on { background: #222323; border-left: 2px solid #c8c8c8; }
.mode-arr { position: absolute; right: 10px; top: 20px; }
.kit { margin-top: auto; display: flex; flex-direction: column; border-top: 1px solid #6a6a6a; padding: 5px 0 8px; }
.kit-name { text-align: center; font-size: 11px; color: #fff; }
.kit .mode { height: 53px; gap: 5px; }
.kit .mode-arr { top: 22px; }
.run { height: 38px; display: grid; place-items: center; }
.kit .mode + .run { margin-top: 15px; }

.work { flex: 1; min-width: 0; display: flex; flex-direction: column; }
.toolbar { height: 24px; flex: none; display: flex; align-items: center; color: #fff; }
.tb-doc { width: 227px; height: 16px; display: flex; align-items: center; gap: 7px; padding: 0 5px 0 6px; border-right: 1px solid #666; }
.tb-doc svg + svg { margin-left: 1px; }
.tb-doc span { padding-top: 2px; }
.tb-doc .push { margin-left: auto; }
.tool { width: 23px; height: 16px; display: grid; place-items: center; }
.tool.close { color: #ccc; border-right: 1px solid #666; }

.panes { flex: 1; min-height: 0; display: flex; }
.filter { display: block; width: 100%; height: 21px; flex: none; border: 1px solid #777; padding: 1px 2px 0; background: #fff; }

/* widget box */
.wbox { width: 257px; flex: none; display: flex; flex-direction: column; border-right: 2px solid #303132; background: #fff; }
.wlist { flex: 1; min-height: 0; display: flex; overflow: hidden; border-top: 1px solid #303132; }
.wscroll { flex: 1; overflow: hidden; }
.whead { height: 17px; display: flex; align-items: center; justify-content: center; position: relative; padding-left: 14px; font-size: 12px; line-height: 16px; border: solid #999; border-width: 1px 0; background: linear-gradient(#f4f4f4, #dedede); }
.whead svg { position: absolute; left: 3px; top: 3px; color: #444; }
.wscroll li { height: 24px; display: flex; align-items: center; gap: 7px; padding-left: 5px; }
.wscroll li svg { width: 20px; height: 20px; }
.wscroll li span { padding-top: 2px; }

/* scrollbars */
.sb { width: 16px; flex: none; display: flex; flex-direction: column; align-items: center; background: #f0f0f0; color: #505050; padding: 5px 0; }
.ar { width: 10px; height: 8px; }
.ar.end { margin-top: auto; }
.thumb { display: block; width: 15px; background: #cdcdcd; margin-top: 4px; }
.t-canvas { height: 218px; }
.t-obj { height: 42px; }
.t-prop { height: 44px; margin-top: 34px; }
.t-out { height: 37px; margin: auto 0 5px; }
.hsb { height: 17px; flex: none; display: flex; align-items: center; gap: 8px; background: #f0f0f0; color: #505050; padding: 0 3px 0 0; }
.hthumb { height: 15px; background: #cdcdcd; flex: 1; }

/* form canvas */
.canvas { flex: 1; min-width: 0; display: flex; flex-direction: column; background: #fff; }
.canvas-view { flex: 1; min-height: 0; display: flex; }
.sheet { position: relative; flex: 1; margin: 11px 9px 0 11px; border-right: 1px solid #999; background: #f0f0f0 conic-gradient(at 1px 1px, transparent 270deg, #999 0) 0 0 / 10px 10px; }
.handle { position: absolute; width: 6px; height: 6px; background: #000; border: 1px solid #00f; }
.h-tl { left: -4px; top: -4px; }
.h-tc { left: calc(50% - 3px); top: -4px; }
.h-tr { right: -4px; top: -4px; }
.h-mr { right: -4px; bottom: 72px; }
.layout-line { position: absolute; right: 27px; top: 80px; bottom: 0; width: 2px; background: #d55; }
.canvas > .hsb { padding-right: 20px; }
.canvas > .hsb .hthumb { margin-right: 2px; }
.act-filter { height: 26px; flex: none; border: 2px solid #303132; border-width: 2px 1px 1px 0; }
.act-list { height: 69px; flex: none; }
.act-tabs { height: 21px; flex: none; border-top: 1px solid #999; background: #f0f0f0; }

/* inspector */
.inspect { width: 258px; flex: none; display: flex; flex-direction: column; border-left: 2px solid #303132; background: #f0f0f0; overflow: hidden; }
.objects { height: 249px; flex: none; display: flex; flex-direction: column; gap: 5px; border-bottom: 1px solid #303132; }
.objs { flex: 1; min-height: 0; display: flex; overflow: hidden; background: #fff; }
.tree, .props { flex: 1; table-layout: fixed; width: 100%; align-self: flex-start; }
th { font-weight: 400; text-align: left; height: 23px; padding: 0 4px; border-right: 1px solid #e0e0e0; }
.tree th:first-child { width: 86px; }
.tree td { height: 17px; padding: 0 0 0 3px; white-space: nowrap; }
.tree td:first-child { padding: 0; }
.tree .tall td { height: 20px; }
.tree .ic { width: 15px; height: 15px; margin-right: 6px; display: inline-block; vertical-align: middle; }
.tree td:last-child .ic { margin-right: 7px; }
.tree .l0 .ic { width: 17px; height: 16px; }
.c { display: flex; align-items: center; height: 20px; gap: 6px; padding-left: 4px; color: #000; }
.c.l1 { padding-left: 24px; }
.c.l2 { padding-left: 44px; gap: 9px; }
.c.l1 .nm { margin-left: 4px; }
.nm { overflow: hidden; }
.ex { width: 10px; height: 8px; color: #444; }
.alt td:last-child { background: #f4f4f4; }
.sel td { background: linear-gradient(#d9d9d9, #d9d9d9) 20px 0 no-repeat; }
.sel td:last-child { background: #d9d9d9; }
.prop-bar { height: 25px; flex: none; display: flex; align-items: center; gap: 6px; background: #404142; padding-right: 5px; }
.prop-bar .filter { flex: 1; min-width: 0; width: auto; height: 22px; border: 0; padding-left: 3px; }
.prop-name { height: 17px; flex: none; padding-left: 2px; border: 1px solid #aaa; border-left: 0; line-height: 16px; background: #f0f0f0; }
.props-wrap { margin-top: 1px; }
.props th { height: 22px; }
.props th:first-child { width: 138px; padding-left: 0; }
.props td { height: 19px; padding: 0 0 0 3px; border-bottom: 1px solid #d4d4d4; white-space: nowrap; line-height: 18px; }
.props td:first-child { padding-left: 12px; border-right: 1px solid #d4d4d4; }
.props td.in { padding-left: 32px; }
.props .d td { background: #ffffbf; }
.props .p td { background: #ffffdf; }
.props .g td { background: #f0f0f0; }
.props .g td:first-child { background: linear-gradient(90deg, #ffffbf 29px, #f0f0f0 29px); }
.props .mid td { height: 20px; }
.props .big td { height: 22px; }
.fa { display: inline-block; width: 22px; font-size: 15px; font-weight: 500; padding-left: 2px; }
.cur { display: inline-block; vertical-align: middle; margin: 0 11px 0 3px; }
.phsb { gap: 16px; padding: 0 20px 0 3px; }
.props .tick { display: block; margin-top: 3px; }

/* output pane */
.output { flex: none; display: flex; flex-direction: column; background: #fff; }
.out-head { height: 25px; display: flex; align-items: center; gap: 13px; padding: 0 6px 0 4px; background: #404142; color: #fff; font-size: 11px; }
.out-title { width: 123px; padding-top: 2px; border-right: 1px solid #666; margin-right: -5px; }
.out-tabs { height: 24px; display: flex; background: #f0f0f0; border-bottom: 1px solid #999; }
.out-tab { height: 24px; display: flex; align-items: center; gap: 4px; padding: 1px 12px 0 11px; background: #fff; border-right: 1px solid #ccc; font-size: 11px; }
.tabx { width: 14px; height: 14px; display: grid; place-items: center; border-radius: 2px; background: #e06a4a; border: 1px solid #c8402a; }
.out-body { display: flex; }
.log { flex: 1; min-width: 0; overflow: hidden; margin: 0; padding: 0 0 15px 4px; font: 13px/17px "DejaVu Sans Mono", monospace; }
.old { color: #808080; }
.start { color: #00009c; }
.tour { height: 27px; flex: none; display: flex; align-items: center; gap: 8px; padding: 0 10px 0 3px; background: #ffffe1; border-top: 1px solid #999; font-size: 11px; white-space: nowrap; }
.tour span { padding-top: 2px; }
.tbtn { height: 17px; line-height: 15px; padding: 0 5px; background: #e1e1e1; border: 1px solid #adadad; }
.plain { margin-left: 4px; }
.status { height: 27px; flex: none; display: flex; align-items: center; color: #fff; font-size: 11px; padding: 1px 7px 0 0; }
.side { margin: 0 13px 0 7px; }
.locate { width: 200px; height: 21px; display: flex; align-items: center; gap: 6px; padding-left: 7px; margin-right: 4px; background: #fff; color: #666; }
.locate input { flex: 1; min-width: 0; border: 0; padding: 1px 0 0; background: none; font-size: 12px; }
.pane { height: 21px; padding: 1px 4px 0; margin: 0 5px; }
.pane i { font-style: normal; margin-right: 7px; }
.pane + .pane { margin-left: 3px; }
.pane.on { background: #222323; }
.updn { margin-left: 11px; }
.prog { width: 23px; height: 21px; display: grid; place-items: center; background: #222323; margin-right: 12px; }

/* taskbar */
.taskbar { height: 40px; flex: none; display: flex; background: #39393b; color: #fff; }
.start-btn { width: 48px; display: grid; place-items: center; }
.search { width: 344px; display: flex; align-items: center; gap: 10px; padding-left: 11px; background: #f2f2f2; border: 1px solid #bbb; color: #222; }
.search input { flex: 1; border: 0; padding: 1px 0 0; background: none; font: 14px/20px "Open Sans", sans-serif; }
.search ::placeholder { color: #444; }
.app { width: 49px; display: grid; place-items: center; }
.run-app { box-shadow: inset 0 -2px #76b9ed; }
.act-app { background: #69696b; box-shadow: inset 0 -2px #76b9ed; }
.tray { margin-left: auto; display: flex; align-items: center; gap: 11px; padding-right: 17px; }
.two { text-align: center; line-height: 17px; font-size: 12px; padding-top: 1px; }

/* running form window */
.dialog { position: absolute; left: 310px; right: 311px; top: 99px; border: 1px solid #6b6b6b; background: #f0f0f0; box-shadow: 0 4px 16px rgba(0, 0, 0, .4); }
.dlg-bar { height: 30px; display: flex; align-items: center; background: #fff; padding-left: 8px; }
.dlg-bar span { margin-left: 6px; }
.dlg-bar .push { margin-left: auto; }
.reg { display: flex; flex-direction: column; padding: 19px 26px 20px 50px; font: 16px/20px "DejaVu Sans Condensed", "DejaVu Sans", sans-serif; }
.reg h1 { align-self: center; font-size: 21px; line-height: 26px; margin-right: 31px; }
.cols { display: grid; grid-template-columns: 361fr 461fr; gap: 79px; margin-top: 52px; }
.col { display: flex; flex-direction: column; gap: 23px; }
.col.right { gap: 31px; padding-top: 8px; }
.row { display: flex; align-items: center; gap: 6px; min-height: 20px; white-space: nowrap; }
.row.tight { gap: 4px; }
.row > label, .row > span:first-child { line-height: 18px; padding-top: 2px; }
.f { flex: 1; min-width: 0; height: 24px; border: 1px solid #7a7a7a; background: #fff; padding: 1px 2px 0; font-size: 14px; }
.big-in { height: 50px; }
.small-in { height: 20px; font: 11px/16px Roboto, sans-serif; }
textarea.f { height: 100px; resize: none; line-height: 18px; padding: 5px 4px; display: block; }
.half { width: 49%; }
.f.half2 { flex: none; }
.half2 { width: 227px; }
.spin { display: flex; align-items: center; height: 20px; border: 1px solid #7a7a7a; background: #fff; padding-right: 1px; font: 11px/16px Roboto, sans-serif; }
.spin input { flex: 1; min-width: 0; border: 0; padding: 2px 2px 0; background: none; }
.gender { display: grid; grid-template-columns: repeat(3, 1fr); min-height: 23px; }
.gender label, .langs label, .agree { display: flex; align-items: center; gap: 5px; }
input[type="radio"] { appearance: none; width: 13px; height: 13px; border: 1px solid #333; border-radius: 50%; background: #fff; }
input[type="radio"]:checked { background: radial-gradient(circle, #222 3px, #fff 4px); }
.tick { appearance: none; width: 13px; height: 13px; border: 1px solid #333; background: #fff; }
.sel-wrap { position: relative; display: flex; }
.sel-wrap > svg { position: absolute; right: 4px; top: 8px; pointer-events: none; }
.sel-wrap select { appearance: none; width: 100%; height: 24px; border: 1px solid #adadad; background: #e1e1e1; padding: 1px 20px 0 3px; font-size: 14px; }
.sel-wrap.year select { height: 20px; border-color: #0a5a9e; background: #cce4f7; font: 11px/16px Roboto, sans-serif; }
.sel-wrap.year > svg { top: 6px; }
.popup { position: absolute; left: 0; right: 0; top: 19px; z-index: 2; border: 1px solid #7a7a8a; background: #fff; box-shadow: 3px 3px 2px rgba(0, 0, 0, .5); font: 11px/13px Roboto, sans-serif; padding-top: 1px; }
.popup li { padding: 0 3px; }
.popup .hot { background: #0078d7; color: #fff; outline: 1px dotted #e08030; outline-offset: -1px; }
.langs { flex: 1; display: grid; grid-template-columns: repeat(4, 1fr); gap: 6px; min-height: 22px; font-size: 14px; }
.agree { align-self: center; margin: 57px 31px 0 0; }
.submit { align-self: center; margin-top: 25px; margin-right: 21px; width: 79px; height: 29px; border: 1px solid #adadad; background: #e1e1e1; font-size: 19px; }
```
